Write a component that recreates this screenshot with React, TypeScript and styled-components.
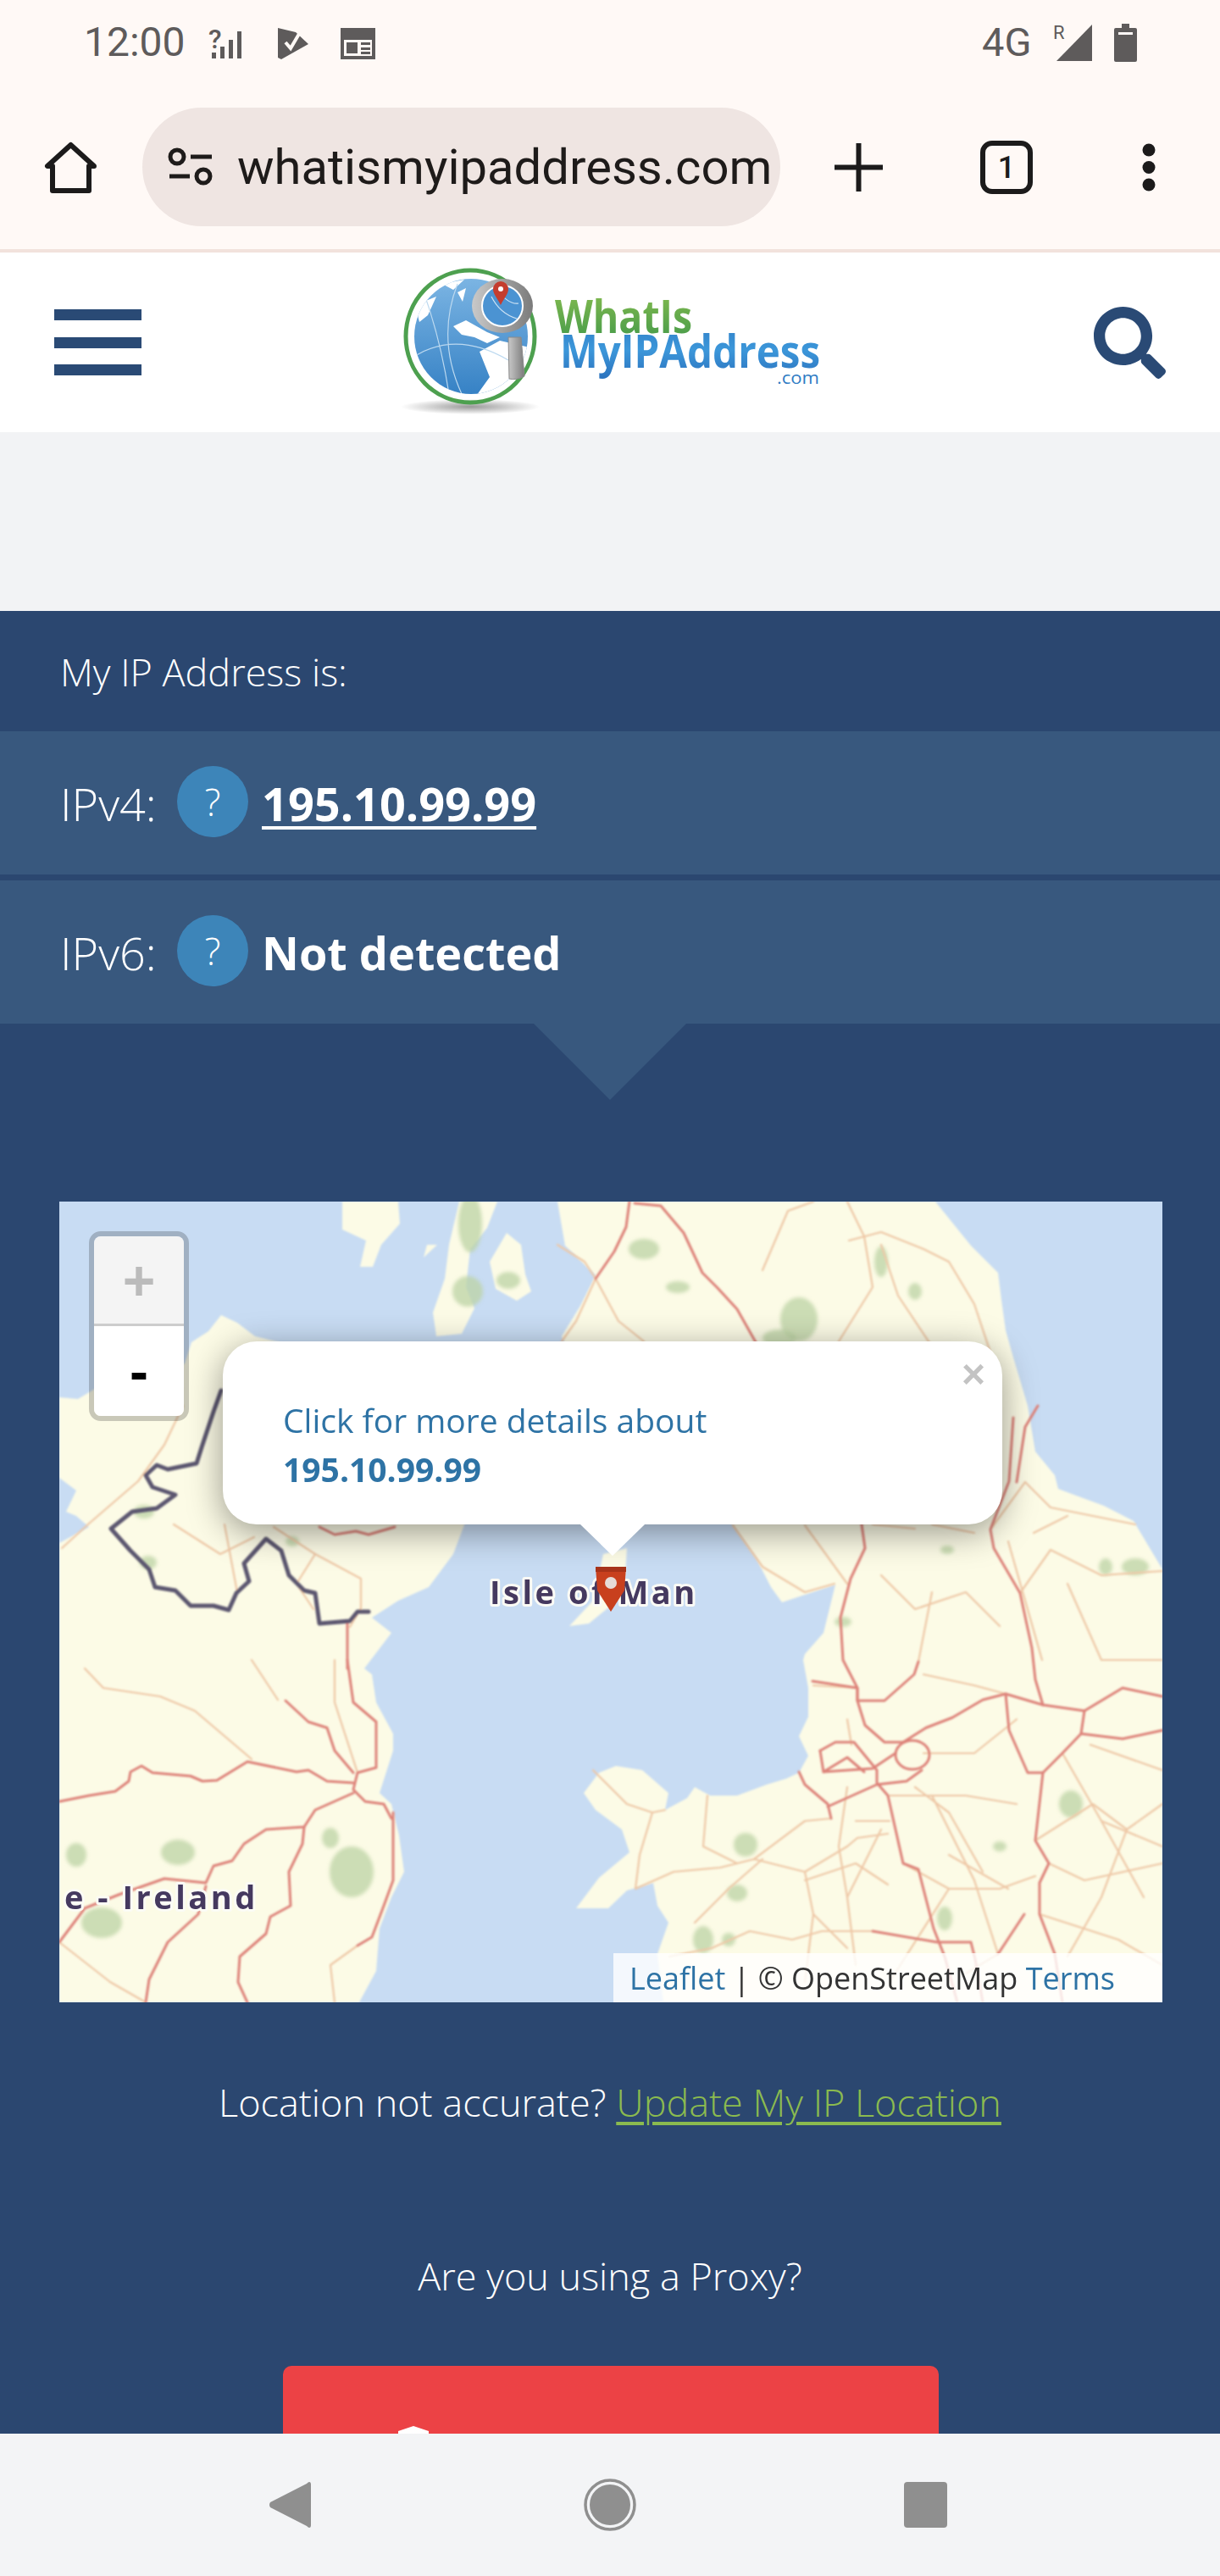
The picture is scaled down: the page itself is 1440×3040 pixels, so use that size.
import React from "react";
import styled, { createGlobalStyle } from "styled-components";
import { FaSearch } from "react-icons/fa";

const Global = createGlobalStyle`
  html, body { margin: 0; padding: 0; background: #f2f3f5; }
  * { box-sizing: border-box; }
`;

const Page = styled.div`
  width: 1440px;
  height: 3040px;
  display: flex;
  flex-direction: column;
  overflow: hidden;
  font-family: "Open Sans", "Noto Sans", sans-serif;
`;

const Chrome = styled.div`
  background: #fff9f6;
  border-bottom: 4px solid #f2e2dc;
  flex: none;
`;

const StatusBar = styled.div`
  height: 100px;
  display: flex;
  align-items: flex-start;
  justify-content: space-between;
  padding: 28px 98px 0 99px;
  color: #5e5b5b;
  font-family: Roboto, sans-serif;
`;

const StatusGroup = styled.div`
  display: flex;
  align-items: flex-start;
`;

const Clock = styled.span`
  font-size: 48px;
  line-height: 44px;
  width: 121px;
  letter-spacing: 0;
`;

const Network = styled.span`
  font-size: 47px;
  line-height: 44px;
  width: 64px;
  margin-right: 20px;
`;

const StatusIcon = styled.svg<{ $left?: number; $top?: number }>`
  display: block;
  flex: none;
  margin-left: ${(p) => p.$left ?? 0}px;
  margin-top: ${(p) => p.$top ?? 0}px;
`;

const ToolBar = styled.div`
  height: 194px;
  display: flex;
  align-items: center;
  padding-left: 52px;
`;

const AddressBar = styled.div`
  width: 753px;
  height: 140px;
  margin-left: 53px;
  margin-right: 64px;
  padding-left: 30px;
  display: flex;
  align-items: center;
  gap: 28px;
  border-radius: 70px;
  background: #efe5e2;
`;

const Url = styled.span`
  font-family: Roboto, sans-serif;
  font-size: 58px;
  color: #1e1b1a;
  white-space: nowrap;
`;

const ToolIcon = styled.svg<{ $left?: number }>`
  display: block;
  flex: none;
  margin-left: ${(p) => p.$left ?? 0}px;
`;

const Main = styled.main`
  flex: 1;
  min-height: 0;
  overflow: hidden;
`;

const SiteHeader = styled.header`
  height: 212px;
  background: #fff;
  display: flex;
  align-items: center;
  justify-content: space-between;
  padding: 0 64px;
`;

const Burger = styled.div`
  width: 103px;
  height: 78px;
  display: flex;
  flex-direction: column;
  justify-content: space-between;
`;

const BurgerBar = styled.span`
  display: block;
  height: 13px;
  background: #2a4a75;
`;

const SearchButton = styled.div`
  display: flex;
  width: 85px;
  height: 86px;
  color: #2a4a75;
  font-size: 85px;
  margin-top: 2px;
`;

const AdSpace = styled.div`
  height: 211px;
  background: #f2f3f5;
`;

const Hero = styled.section`
  background: #2b4770;
  color: #fff;
  height: 2300px;
`;

const Heading = styled.div`
  height: 142px;
  padding-left: 71px;
  display: flex;
  align-items: center;
  font-size: 45px;
  font-weight: 300;
`;

const IpRow = styled.div<{ $gap?: boolean }>`
  height: 169px;
  margin-top: ${(p) => (p.$gap ? 7 : 0)}px;
  background: #38587e;
  padding-left: 71px;
  display: flex;
  align-items: center;
  font-size: 54px;
`;

const IpLabel = styled.span`
  font-weight: 300;
  width: 138px;
`;

const Help = styled.span`
  width: 84px;
  height: 84px;
  border-radius: 50%;
  background: #3d85b9;
  display: flex;
  align-items: center;
  justify-content: center;
  font-size: 45px;
  font-weight: 300;
  margin-top: -4px;
  margin-right: 16px;
`;

const IpValue = styled.a`
  font-weight: 700;
  color: #fff;
  text-decoration: underline;
  text-decoration-thickness: 4px;
  text-underline-offset: 6px;
`;

const IpPlain = styled.span`
  font-weight: 700;
`;

const Pointer = styled.div`
  width: 0;
  height: 0;
  margin: 0 auto;
  border-top: 90px solid #38587e;
  border-left: 90px solid transparent;
  border-right: 90px solid transparent;
`;

const MapFrame = styled.div`
  position: relative;
  width: 1302px;
  height: 945px;
  margin: 120px 0 0 70px;
  overflow: hidden;
  background: #c8dcf3;
`;

const MapArt = styled.svg`
  display: block;
  width: 1302px;
  height: 945px;
`;

const ZoomControl = styled.div`
  position: absolute;
  left: 35px;
  top: 35px;
  width: 118px;
  height: 224px;
  border: 6px solid rgba(0, 0, 0, 0.2);
  border-radius: 14px;
  background-clip: padding-box;
  overflow: hidden;
  display: flex;
  flex-direction: column;
`;

const ZoomButton = styled.div<{ $off?: boolean }>`
  height: 106px;
  background: ${(p) => (p.$off ? "#f4f4f4" : "#fff")};
  color: ${(p) => (p.$off ? "#bbb" : "#000")};
  border-bottom: ${(p) => (p.$off ? "3px solid #ccc" : "none")};
  flex: ${(p) => (p.$off ? "none" : 1)};
  display: flex;
  align-items: center;
  justify-content: center;
  font-family: "Liberation Sans", sans-serif;
  font-size: 66px;
  font-weight: 700;
`;

const Popup = styled.div`
  position: absolute;
  left: 193px;
  top: 165px;
  width: 920px;
  height: 216px;
  padding: 64px 0 0 71px;
  background: #fff;
  border-radius: 40px;
  box-shadow: 0 9px 42px rgba(0, 0, 0, 0.4);
  color: #2e73a5;
  font-size: 39px;
  line-height: 58px;
`;

const PopupBold = styled.b`
  display: block;
  font-weight: 700;
`;

const PopupClose = styled.span`
  position: absolute;
  right: 20px;
  top: 7px;
  color: #c3c3c3;
  font-family: "Liberation Sans", sans-serif;
  font-size: 48px;
  line-height: 64px;
  font-weight: 700;
`;

const PopupTip = styled.span`
  position: absolute;
  left: 422px;
  top: 216px;
  width: 0;
  height: 0;
  border-top: 37px solid #fff;
  border-left: 38px solid transparent;
  border-right: 38px solid transparent;
`;

const Attribution = styled.div`
  position: absolute;
  right: 0;
  bottom: 0;
  height: 58px;
  width: 648px;
  padding-left: 19px;
  display: flex;
  align-items: center;
  background: rgba(255, 255, 255, 0.8);
  color: #333;
  font-size: 36px;
  white-space: pre;
`;

const AttrLink = styled.a`
  color: #2e73a5;
`;

const CenterLine = styled.p<{ $top: number }>`
  margin: ${(p) => p.$top}px 0 0;
  text-align: center;
  font-size: 45px;
  line-height: 62px;
  font-weight: 300;
`;

const GreenLink = styled.a`
  color: #8bbb4f;
  text-decoration: underline;
  text-decoration-thickness: 4px;
  text-underline-offset: 6px;
`;

const ProxyButton = styled.div`
  width: 774px;
  height: 200px;
  margin: 75px 0 0 334px;
  padding: 71px 0 0 136px;
  background: #ec4245;
  border-radius: 10px;
`;

const BottomNav = styled.nav`
  flex: none;
  height: 168px;
  background: #f3f4f6;
  display: flex;
  align-items: center;
  padding-left: 317px;
`;

const NavIcon = styled.svg<{ $left?: number }>`
  display: block;
  flex: none;
  margin-left: ${(p) => p.$left ?? 0}px;
`;

const land: string[] = [
  // Ireland
  "M70 1650 L92 1652 L112 1640 L150 1665 L170 1640 L198 1625 L218 1610 L226 1585 L246 1572 L261 1553 L280 1562 L301 1578 L350 1590 L480 1640 L552 1790 L535 1835 L506 1874 L470 1890 L439 1910 L462 1928 L430 1970 L439 1977 L444 2010 L464 2047 L464 2067 L448 2117 L462 2130 L471 2167 L477 2210 L462 2240 L448 2277 L444 2327 L424 2364 L70 2364 L70 1822 L105 1803 L90 1790 L78 1785 L90 1760 L70 1745 Z",
  // Kintyre
  "M404 1419 L470 1419 L472 1445 L450 1470 L440 1496 L425 1496 L432 1465 L404 1452 Z",
  // Long Arran / Bute
  "M542 1419 L587 1419 L575 1450 L555 1475 L550 1520 L560 1545 L545 1575 L515 1578 L511 1550 L525 1510 L530 1470 Z",
  "M598 1456 L615 1470 L620 1505 L627 1525 L610 1536 L585 1522 L578 1490 Z",
  "M504 1470 L500 1485 L516 1470 Z",
  // Scotland + England
  "M658 1419 L1104 1419 L1146 1471 L1178 1503 L1182 1535 L1187 1571 L1196 1603 L1213 1660 L1222 1714 L1245 1742 L1249 1758 L1303 1778 L1338 1796 L1372 1853 L1372 2364 L783 2364 L776 2307 L789 2270 L776 2250 L771 2223 L740 2232 L718 2253 L712 2253 L680 2253 L707 2217 L743 2187 L734 2160 L703 2137 L689 2117 L707 2093 L727 2085 L758 2090 L789 2117 L785 2137 L811 2123 L820 2110 L838 2120 L870 2120 L905 2107 L928 2100 L943 2093 L954 2073 L943 2050 L954 2027 L954 1993 L948 1960 L950 1953 L972 1928 L986 1871 L923 1892 L910 1874 L892 1839 L865 1801 L840 1770 L770 1790 L720 1700 L663 1578 L685 1542 L703 1506 L667 1471 Z",
  // Isle of Man
  "M712 1835 L740 1828 L738 1860 L722 1895 L695 1917 L672 1920 L700 1890 Z",
];

const green: [number, number, number, number][] = [
  [555, 1445, 14, 34], [552, 1525, 18, 18], [600, 1512, 14, 10], [330, 1440, 0, 0],
  [943, 1558, 22, 26], [920, 1580, 20, 10], [760, 1475, 18, 12], [800, 1520, 14, 7],
  [1340, 1850, 16, 10], [1305, 1850, 8, 10], [1080, 1525, 8, 10], [1040, 1490, 8, 18],
  [210, 2187, 20, 15], [120, 2270, 24, 18], [90, 2190, 12, 14], [415, 2210, 26, 30],
  [390, 2170, 10, 12], [345, 1820, 8, 6], [175, 1845, 10, 8], [170, 1785, 12, 8],
  [880, 2178, 14, 14], [870, 2235, 12, 10], [830, 2290, 12, 16], [1115, 2265, 9, 14],
  [1264, 2130, 14, 16], [860, 2290, 8, 8], [760, 1610, 0, 0], [1180, 2180, 8, 6],
  [995, 1915, 10, 6], [1080, 1780, 10, 7], [1118, 1830, 8, 5], [880, 1730, 12, 8],
];

const major: string[] = [
  "743,1419 739,1449 725,1478 703,1510",
  "749,1421 780,1424 807,1456 829,1503 847,1521 870,1546 892,1585",
  "1017,1800 1021,1828 1004,1864 992,1910 995,1960 1012,1993 1012,2008 1021,2037 1044,2057 1066,2057",
  "1196,1674 1191,1749 1169,1806 1173,1828 1204,1881 1218,1946 1222,1983 1231,2013",
  "959,1985 1012,1993 1012,2008 1044,2008 1079,1977 1084,1962",
  "1066,2057 1093,2040 1124,2028 1160,2007 1187,2000 1231,2013 1280,2020 1325,1993 1372,2003",
  "1280,2020 1276,2047 1325,2053 1372,2043",
  "1276,2047 1254,2070 1231,2093 1213,2093 1191,2043 1187,2000",
  "1231,2093 1222,2173 1238,2200 1227,2223 1227,2260 1245,2307 1254,2364",
  "968,2067 986,2057 1008,2057 1035,2090 1035,2105 1048,2120 1066,2200 1084,2207 1102,2277 1115,2310 1130,2364",
  "972,2092 1030,2088 1057,2070",
  "943,2092 950,2107 977,2130 981,2147",
  "977,2133 1035,2107 1070,2103 1088,2090",
  "1030,2280 1106,2293 1146,2293 1151,2313 1160,2364",
  "1178,2307 1209,2260",
  "968,2067 972,2092 1000,2075 1020,2092",
  // Ireland
  "70,2127 105,2120 136,2115 152,2103 154,2092 167,2085 180,2093 225,2097 239,2103 256,2102 292,2080 350,2092 364,2090 386,2103 417,2105",
  "410,1960 417,2010 444,2033 444,2087 422,2093 417,2113 431,2127 453,2130 462,2147",
  "337,2008 364,2033 386,2040 395,2067 417,2093",
  "417,2117 372,2137 359,2157 314,2160 288,2177 274,2197 252,2203 243,2223 194,2218 140,2237 100,2253 70,2293",
  "359,2157 357,2177 341,2210 343,2250 319,2263 314,2283 283,2310 281,2340 292,2364",
  "243,2227 234,2260 198,2293 176,2337 172,2364",
  "464,2140 464,2220 453,2250 439,2287 422,2297",
  "410,1915 410,1970",
  "377,1803 395,1812 420,1808 435,1812 466,1803",
  "1225,1660 1210,1685 1200,1750",
];

const minor: string[] = [
  "658,1470 690,1490 703,1510 680,1560 663,1584",
  "703,1510 730,1560 760,1584",
  "1002,1465 1040,1455 1090,1475 1120,1490 1150,1540 1170,1600",
  "900,1500 930,1430 960,1419",
  "1000,1419 1020,1460 1030,1520 990,1584",
  "1040,1470 1060,1530 1100,1590",
  "73,1828 105,1799 163,1749 194,1706 216,1660",
  "323,1803 372,1835 426,1864 426,1899 413,1921",
  "372,1835 350,1870 370,1900",
  "205,1800 260,1835 300,1815",
  "265,1800 280,1880",
  "100,1970 122,1993 189,2003 230,2020 297,2077",
  "297,1960 328,2007",
  "395,1960 395,2010 422,2093",
  "70,2293 130,2340 172,2364",
  "422,2297 390,2320 395,2364",
  "865,1801 900,1850 950,1880 985,1870",
  "950,1801 1000,1870",
  "1100,1800 1150,1810",
  "1030,1800 1080,1805",
  "1169,1806 1210,1750 1240,1780 1290,1790 1340,1800",
  "1204,1881 1240,1830 1300,1860 1372,1855",
  "1220,1810 1260,1790",
  "1190,1820 1230,1960",
  "1040,1860 1080,1900 1140,1880 1180,1920",
  "1012,1993 960,1990",
  "1090,1977 1150,1990 1187,2000",
  "1100,1880 1084,1962",
  "1260,1870 1300,1960 1372,1960",
  "700,2090 740,2130 770,2140 785,2137",
  "770,2140 755,2190 750,2230 795,2210 850,2205 890,2195 950,2210",
  "835,2120 830,2180 870,2200",
  "890,2195 950,2150 981,2147",
  "950,2210 960,2260 1000,2300",
  "950,2210 1000,2180 1012,2170 1048,2165",
  "1005,2060 1000,2030",
  "820,2270 860,2230 900,2195",
  "790,2310 840,2300 885,2280 935,2290 970,2280 1030,2280",
  "950,2220 1010,2200 1048,2225",
  "960,2260 950,2340",
  "1048,2120 1140,2120 1200,2130",
  "1066,2200 1120,2230 1180,2230 1222,2215",
  "1100,2120 1120,2160 1150,2220",
  "1222,2173 1290,2130 1330,2160 1372,2130",
  "1254,2070 1300,2150 1350,2240",
  "1330,2160 1300,2240 1260,2310",
  "1300,2150 1372,2180",
  "1238,2200 1280,2220 1372,2200",
  "1227,2260 1320,2290 1372,2320",
  "1150,2220 1178,2307 1140,2330",
  "1120,2230 1050,2340",
  "1090,2070 1150,2070 1200,2030",
  "1080,2110 1120,2140 1160,2210",
  "1000,2110 990,2180 1000,2240",
  "1040,2160 1000,2240 1010,2320",
  "1120,2190 1190,2230",
  "1287,2060 1372,2090",
  "1010,2150 1050,2150",
];

const App: React.FC = () => (
  <Page>
    <Global />
    <Chrome>
      <StatusBar>
        <StatusGroup>
          <Clock>12:00</Clock>
          <StatusIcon $left={26} $top={5} width="43" height="37" viewBox="0 0 43 37" fill="#5e5b5b">
            <text x="0" y="24" fontFamily="Roboto, sans-serif" fontSize="32" fontWeight="500">?</text>
            <rect x="4" y="29" width="5" height="7" />
            <rect x="14" y="22" width="5" height="14" />
            <rect x="24" y="14" width="5" height="22" />
            <rect x="34" y="4" width="5" height="32" />
          </StatusIcon>
          <StatusIcon $left={38} $top={4} width="38" height="39" viewBox="0 0 38 39">
            <path d="M1 1 L22 6 L37 20 L5 38 L1 36 Z" fill="#5e5b5b" />
            <path d="M10 18 L16 25 L26 8" fill="none" stroke="#fff9f6" strokeWidth="4" />
          </StatusIcon>
          <StatusIcon $left={36} $top={4} width="43" height="39" viewBox="0 0 43 39" fill="none">
            <path d="M1 1 L42 1 L42 38 L1 38 Z" fill="#5e5b5b" />
            <rect x="5" y="10" width="33" height="24" fill="#fff9f6" />
            <rect x="5" y="10" width="33" height="5" fill="#5e5b5b" />
            <rect x="8" y="18" width="13" height="13" fill="#5e5b5b" />
            <rect x="25" y="18" width="11" height="3" fill="#5e5b5b" />
            <rect x="25" y="24" width="11" height="3" fill="#5e5b5b" />
            <rect x="25" y="29" width="11" height="3" fill="#5e5b5b" />
          </StatusIcon>
        </StatusGroup>
        <StatusGroup>
          <Network>4G</Network>
          <StatusIcon $top={0} width="47" height="44" viewBox="0 0 47 44" fill="#5e5b5b">
            <text x="0" y="18" fontFamily="Roboto, sans-serif" fontSize="22">R</text>
            <path d="M46 1 V44 H4 Z" />
          </StatusIcon>
          <StatusIcon $left={25} $top={0} width="27" height="45" viewBox="0 0 27 45" fill="#5e5b5b">
            <path d="M9 0 H18 V5 H25 Q27 5 27 7 V43 Q27 45 25 45 H2 Q0 45 0 43 V7 Q0 5 2 5 H9 Z" />
            <rect x="5" y="10" width="17" height="3" fill="#fff9f6" />
          </StatusIcon>
        </StatusGroup>
      </StatusBar>
      <ToolBar>
        <ToolIcon width="63" height="63" viewBox="0 0 63 63" fill="none">
          <path d="M31.5 5 L4 30 H10 V59 H53 V30 H59 Z" stroke="#1c1b1b" strokeWidth="6" strokeLinejoin="round" />
        </ToolIcon>
        <AddressBar>
          <ToolIcon width="54" height="46" viewBox="0 0 54 46" fill="none" stroke="#1e1b1a" strokeWidth="5">
            <circle cx="11" cy="11" r="8" />
            <path d="M27 11 H52" />
            <path d="M2 34 H26" />
            <circle cx="42" cy="34" r="8" />
          </ToolIcon>
          <Url>whatismyipaddress.com</Url>
        </AddressBar>
        <ToolIcon width="57" height="57" viewBox="0 0 57 57" stroke="#1c1b1b" strokeWidth="6">
          <path d="M28.5 0 V57 M0 28.5 H57" />
        </ToolIcon>
        <ToolIcon $left={115} width="62" height="63" viewBox="0 0 62 63" fill="none">
          <rect x="3" y="3" width="56" height="57" rx="11" stroke="#1c1b1b" strokeWidth="6" />
          <text x="31" y="44" textAnchor="middle" fontFamily="Roboto, sans-serif" fontSize="36" fontWeight="500" fill="#1c1b1b">1</text>
        </ToolIcon>
        <ToolIcon $left={129} width="16" height="57" viewBox="0 0 16 57" fill="#1c1b1b">
          <circle cx="8" cy="8" r="7.5" />
          <circle cx="8" cy="28.5" r="7.5" />
          <circle cx="8" cy="49" r="7.5" />
        </ToolIcon>
      </ToolBar>
    </Chrome>
    <Main>
      <SiteHeader>
        <Burger>
          <BurgerBar />
          <BurgerBar />
          <BurgerBar />
        </Burger>
        <svg width="510" height="188" viewBox="474 310 510 188">
          <defs>
            <linearGradient id="globeFill" x1="0" y1="0" x2="0" y2="1">
              <stop offset="0" stopColor="#7db6e4" />
              <stop offset="1" stopColor="#3480c4" />
            </linearGradient>
            <linearGradient id="whatFill" x1="0" y1="0" x2="0" y2="1">
              <stop offset="0" stopColor="#8cbf4f" />
              <stop offset="1" stopColor="#3f974a" />
            </linearGradient>
            <linearGradient id="myFill" x1="0" y1="0" x2="0" y2="1">
              <stop offset="0" stopColor="#2f7cc4" />
              <stop offset="0.5" stopColor="#3c97da" />
              <stop offset="1" stopColor="#2a6fbb" />
            </linearGradient>
            <radialGradient id="logoShade">
              <stop offset="0" stopColor="#999" />
              <stop offset="1" stopColor="#fff" />
            </radialGradient>
            <linearGradient id="steel" x1="0" y1="0" x2="1" y2="0">
              <stop offset="0" stopColor="#c9c9c9" />
              <stop offset="1" stopColor="#7b7b7b" />
            </linearGradient>
            <clipPath id="globeClip">
              <ellipse cx="556" cy="397" rx="67" ry="68" />
            </clipPath>
          </defs>
          <ellipse cx="555" cy="480" rx="82" ry="9" fill="url(#logoShade)" />
          <ellipse cx="555" cy="397" rx="76" ry="78" fill="none" stroke="#4da04f" strokeWidth="5" />
          <g clipPath="url(#globeClip)">
            <rect x="480" y="325" width="150" height="145" fill="url(#globeFill)" />
            <path d="M490 380 L520 378 L545 400 L560 410 L575 400 L590 405 L600 470 L560 470 L568 445 L575 425 L560 415 L540 400 L510 385 Z" fill="#fff" opacity="0" />
            <path d="M566 415 L590 402 L625 410 L625 470 L560 470 L578 445 Z" fill="#fff" />
            <path d="M535 385 L550 378 L575 392 L590 398 L575 405 L560 398 L545 395 Z" fill="#fff" />
            <path d="M522 335 L548 330 L535 342 Z M540 345 L550 340 L546 356 Z M490 360 L515 350 L505 372 L495 380 Z" fill="#fff" />
            <path d="M500 345 Q520 400 530 465 M490 420 Q540 390 600 425 M540 335 Q515 400 545 465" fill="none" stroke="#bcd9f0" strokeWidth="1.2" />
          </g>
          <ellipse cx="593" cy="361" rx="36" ry="32" fill="url(#steel)" />
          <ellipse cx="593" cy="361" rx="24" ry="24" fill="#4b93d2" stroke="#fff" strokeWidth="2" />
          <path d="M580 350 Q590 370 610 376 M585 340 Q600 360 612 358" fill="none" stroke="#cfe4f5" strokeWidth="1.2" />
          <path d="M591 360 C586 350 582 347 582 341 A9 9 0 0 1 600 341 C600 347 596 350 591 360 Z" fill="#c43d2f" />
          <circle cx="591" cy="341" r="3" fill="#fff" />
          <path d="M600 398 H615 L619 444 Q610 449 601 447 Z" fill="url(#steel)" stroke="#8a8a8a" />
          <text x="655" y="393" textLength="162" lengthAdjust="spacingAndGlyphs" fontFamily="'Open Sans', sans-serif" fontSize="54" fontWeight="700" fill="url(#whatFill)">WhatIs</text>
          <text x="661" y="434" textLength="307" lengthAdjust="spacingAndGlyphs" fontFamily="'Open Sans', sans-serif" fontSize="54" fontWeight="700" fill="url(#myFill)">MyIPAddress</text>
          <text x="917" y="453" textLength="50" lengthAdjust="spacingAndGlyphs" fontFamily="'Open Sans', sans-serif" fontSize="20" fill="#2f7cc4">.com</text>
        </svg>
        <SearchButton>
          <FaSearch />
        </SearchButton>
      </SiteHeader>
      <AdSpace />
      <Hero>
        <Heading>My IP Address is:</Heading>
        <IpRow>
          <IpLabel>IPv4:</IpLabel>
          <Help>?</Help>
          <IpValue>195.10.99.99</IpValue>
        </IpRow>
        <IpRow $gap>
          <IpLabel>IPv6:</IpLabel>
          <Help>?</Help>
          <IpPlain>Not detected</IpPlain>
        </IpRow>
        <Pointer />
        <MapFrame>
          <MapArt viewBox="70 1419 1302 945">
            <defs>
              <filter id="soft" x="-2%" y="-2%" width="104%" height="104%">
                <feGaussianBlur stdDeviation="0.8" />
              </filter>
              <filter id="softer" x="-20%" y="-20%" width="140%" height="140%">
                <feGaussianBlur stdDeviation="2.2" />
              </filter>
            </defs>
            <rect x="70" y="1419" width="1302" height="945" fill="#c8dcf3" />
            <g filter="url(#soft)">
              {land.map((d, i) => (
                <path key={i} d={d} fill="#fcfbe6" />
              ))}
            </g>
            <g filter="url(#softer)">
              {green.map(([cx, cy, rx, ry], i) => (
                <ellipse key={i} cx={cx} cy={cy} rx={rx} ry={ry} fill="#bcd3a4" opacity="0.75" />
              ))}
            </g>
            <g fill="none" filter="url(#soft)" strokeLinejoin="round" strokeLinecap="round">
              {minor.map((p, i) => (
                <polyline key={i} points={p} stroke="#eec7a6" strokeWidth="2.2" />
              ))}
              {major.map((p, i) => (
                <polyline key={i} points={p} stroke="#dd8279" strokeWidth="3" />
              ))}
              <ellipse cx="1077" cy="2072" rx="20" ry="17" stroke="#dd8279" strokeWidth="3" />
              <polyline
                points="261,1642 252,1667 239,1706 232,1728 198,1735 185,1730 172,1742 180,1756 207,1765 185,1781 156,1785 131,1805 154,1831 176,1853 183,1874 207,1878 225,1896 252,1896 270,1901 279,1881 294,1867 288,1846 314,1817 332,1831 341,1860 359,1878 372,1881 377,1917 413,1914 422,1903 435,1903"
                stroke="#5c566f"
                strokeWidth="5"
              />
            </g>
            <g fontFamily="'Open Sans', sans-serif" fontWeight="700" fontSize="38" letterSpacing="3.5" fill="#45395f" stroke="#fbfbf5" strokeWidth="6" style={{ paintOrder: "stroke" }} strokeLinejoin="round">
              <text x="578" y="1894">Isle of Man</text>
              <text x="76" y="2254">e - Ireland</text>
            </g>
            <path d="M703 1850 L739 1850 L737 1878 L721 1903 L705 1878 Z" fill="#c8401e" />
            <path d="M703 1850 L739 1850 L739 1856 L703 1856 Z" fill="#a8341a" />
            <circle cx="721" cy="1869" r="7" fill="#e6dcd8" />
          </MapArt>
          <ZoomControl>
            <ZoomButton $off>+</ZoomButton>
            <ZoomButton>-</ZoomButton>
          </ZoomControl>
          <Popup>
            Click for more details about
            <PopupBold>195.10.99.99</PopupBold>
            <PopupClose>×</PopupClose>
            <PopupTip />
          </Popup>
          <Attribution>
            <AttrLink>Leaflet</AttrLink> | © OpenStreetMap <AttrLink>Terms</AttrLink>
          </Attribution>
        </MapFrame>
        <CenterLine $top={87}>
          Location not accurate? <GreenLink>Update My IP Location</GreenLink>
        </CenterLine>
        <CenterLine $top={143}>Are you using a Proxy?</CenterLine>
        <ProxyButton>
          <svg width="36" height="10" viewBox="0 0 36 10" style={{ display: "block" }}>
            <path d="M0 6 L18 0 L36 6 V10 H0 Z" fill="#fff" />
          </svg>
        </ProxyButton>
      </Hero>
    </Main>
    <BottomNav>
      <NavIcon width="50" height="56" viewBox="0 0 50 56" fill="#8f8f8f">
        <path d="M48 1 Q50 1 50 4 V52 Q50 55 48 55 Q47 55 45 53 L2 31 Q0 28 2 25 L45 3 Q47 1 48 1 Z" />
      </NavIcon>
      <NavIcon $left={322} width="62" height="62" viewBox="0 0 62 62">
        <circle cx="31" cy="31" r="29" fill="none" stroke="#8f8f8f" strokeWidth="3.5" />
        <circle cx="31" cy="31" r="24" fill="#8f8f8f" />
      </NavIcon>
      <NavIcon $left={316} width="51" height="54" viewBox="0 0 51 54">
        <rect width="51" height="54" rx="4" fill="#8f8f8f" />
      </NavIcon>
    </BottomNav>
  </Page>
);

export default App;
